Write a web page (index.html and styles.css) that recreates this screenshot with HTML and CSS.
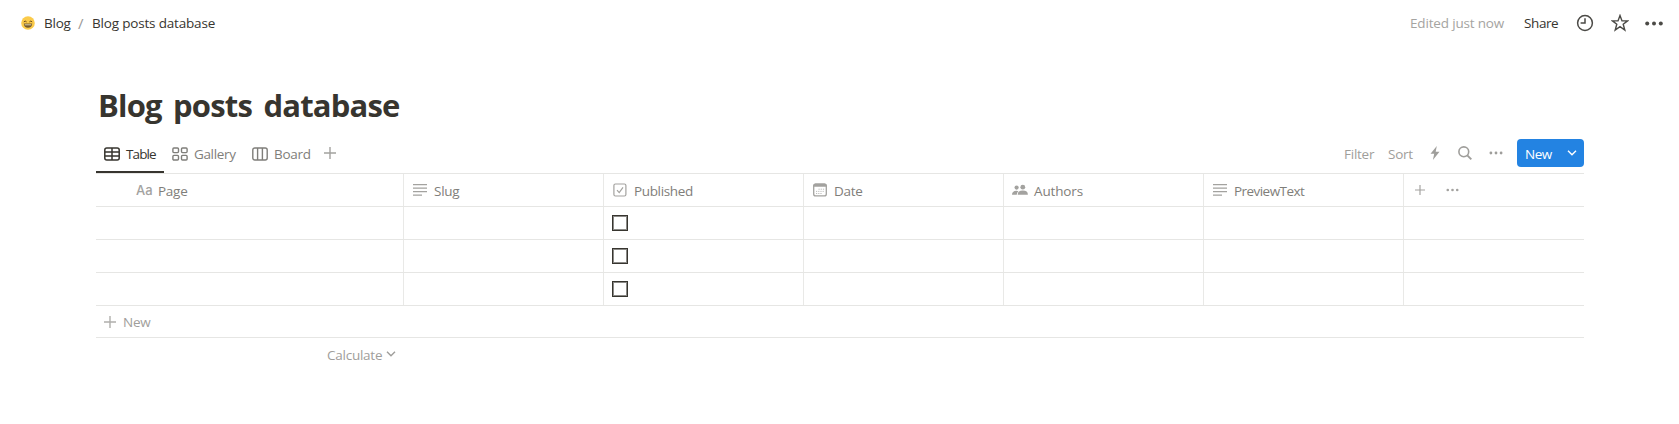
FILE: index.html
```html
<!DOCTYPE html>
<html lang="en">
<head>
<meta charset="utf-8">
<title>Blog posts database</title>
<link rel="stylesheet" href="styles.css">
</head>
<body>
<svg class="defs" width="0" height="0">
  <symbol id="plus" viewBox="0 0 12 12"><path d="M6 0v12M0 6h12" fill="none" stroke="currentColor" stroke-width="1.4"/></symbol>
  <symbol id="dots" viewBox="0 0 14 4"><g fill="currentColor"><circle cx="1.9" cy="2" r="1.4"/><circle cx="7" cy="2" r="1.4"/><circle cx="12.1" cy="2" r="1.4"/></g></symbol>
  <symbol id="chevron" viewBox="0 0 10 6"><path d="M1 .8l4 4 4-4" fill="none" stroke="currentColor" stroke-width="1.4"/></symbol>
  <symbol id="lines" viewBox="0 0 14 12"><path d="M0 .6h14M0 4.1h14M0 7.6h14M0 11.1h9" fill="none" stroke="currentColor" stroke-width="1.2"/></symbol>
</svg>
<header class="topbar">
  <nav class="crumbs">
    <svg class="emoji" width="14" height="14" viewBox="0 0 14 14"><circle cx="7" cy="7" r="6.8" fill="#fbcb4b"/><path d="M2.8 5.9q1.4-1.7 2.8 0M8.4 5.9q1.4-1.7 2.8 0" fill="none" stroke="#6b4a1c" stroke-width="1"/><path d="M2.8 7.4h8.4q-.3 4.4-4.2 4.4T2.8 7.4z" fill="#765a2a"/><path d="M3.7 8.3h6.6v1H3.7z" fill="#d9cfae"/></svg>
    <span class="crumb-parent">Blog</span>
    <span class="slash">/</span>
    <span class="crumb-page">Blog posts database</span>
  </nav>
  <div class="actions">
    <span class="edited">Edited just now</span>
    <span class="share">Share</span>
    <svg class="clock" width="18" height="18" viewBox="0 0 18 18"><g fill="none" stroke="currentColor" stroke-width="1.5"><circle cx="9" cy="9" r="7.4"/><path d="M9 4.3V9H4.6"/></g></svg>
    <svg class="star" width="18" height="18" viewBox="0 0 18 18"><path d="M9 1.5l2 5.4h5.6l-4.4 3.4 1.6 5.8L9 12.7l-4.8 3.4 1.6-5.8L1.4 6.9H7z" fill="none" stroke="currentColor" stroke-width="1.4"/></svg>
    <svg class="more" width="18" height="5" viewBox="0 0 18 5"><g fill="currentColor"><circle cx="2.2" cy="2.5" r="2"/><circle cx="9" cy="2.5" r="2"/><circle cx="15.8" cy="2.5" r="2"/></g></svg>
  </div>
</header>
<main class="page">
  <h1 class="title">Blog posts database</h1>
  <div class="viewbar">
    <div class="tabs">
      <div class="tab tab-active"><svg width="16" height="14" viewBox="0 0 16 14"><g fill="none" stroke="currentColor" stroke-width="1.5"><rect x=".8" y="1" width="14.4" height="12" rx="2"/><path d="M1 5h14M1 9h14M8 1v12"/></g></svg><span class="t-table">Table</span></div>
      <div class="tab"><svg width="16" height="14" viewBox="0 0 16 14"><g fill="none" stroke="currentColor" stroke-width="1.4"><rect x=".9" y="1" width="5.6" height="4.6" rx="1"/><rect x="9.5" y="1" width="5.6" height="4.6" rx="1"/><rect x=".9" y="8.4" width="5.6" height="4.6" rx="1"/><rect x="9.5" y="8.4" width="5.6" height="4.6" rx="1"/></g></svg><span class="t-gallery">Gallery</span></div>
      <div class="tab"><svg width="16" height="14" viewBox="0 0 16 14"><g fill="none" stroke="currentColor" stroke-width="1.4"><rect x=".8" y="1" width="14.4" height="12" rx="2"/><path d="M5.6 1v12M10.4 1v12"/></g></svg><span class="t-board">Board</span></div>
      <svg class="add-view" width="12" height="12"><use href="#plus"/></svg>
    </div>
    <div class="tools">
      <span class="filter">Filter</span>
      <span class="sort">Sort</span>
      <svg class="bolt" width="10" height="14" viewBox="0 0 10 14"><path d="M6.8 0L.5 7.8h3.7L2.9 14l6.6-8.3H5.7z" fill="currentColor"/></svg>
      <svg class="search" width="14" height="14" viewBox="0 0 14 14"><g fill="none" stroke="currentColor" stroke-width="1.6"><circle cx="5.8" cy="5.8" r="4.9"/><path d="M9.3 9.3l4 4" stroke-width="1.9"/></g></svg>
      <svg class="view-more" width="14" height="4"><use href="#dots"/></svg>
      <div class="new-button"><span>New</span><i class="new-drop"><svg width="10" height="6"><use href="#chevron"/></svg></i></div>
    </div>
  </div>
  <section class="grid">
    <div class="row head">
      <div class="cell first"><b class="aa">Aa</b><span class="c-page">Page</span></div>
      <div class="cell"><svg width="16" height="14" viewBox="-1 -1 16 14"><use href="#lines" width="14" height="12"/></svg><span class="c-slug">Slug</span></div>
      <div class="cell"><svg width="16" height="14" viewBox="0 0 16 14"><g fill="none" stroke="currentColor" stroke-width="1.2"><rect x="1.9" y="1" width="12" height="12" rx="1.5"/><path d="M5 7.2l2.2 2.4L11 4.4"/></g></svg><span class="c-published">Published</span></div>
      <div class="cell"><svg width="16" height="14" viewBox="0 0 16 14"><rect x="1.7" y="1.1" width="12.6" height="11.8" rx="2" fill="none" stroke="currentColor" stroke-width="1.3"/><path d="M1.3 2.6Q1.3.5 3.3.5h9.4q2 0 2 2.1v1.2H1.3z" fill="currentColor"/><path d="M6.5 6.2h6M4 8.4h8.5M4 10.5h6" stroke="currentColor" stroke-width="1" stroke-dasharray="1.2 1" fill="none" opacity=".7"/></svg><span class="c-date">Date</span></div>
      <div class="cell"><svg width="16" height="14" viewBox="0 0 16 14"><g fill="currentColor"><circle cx="4.6" cy="4.6" r="2.1"/><circle cx="10.8" cy="4.2" r="2.4"/><path d="M0 11.7q0-3.7 4.4-4 1.2 0 2 .5-1.6 1.3-1.6 3.5z"/><path d="M5.7 11.7q0-4.2 5.1-4.2t5.1 4.2z"/></g></svg><span class="c-authors">Authors</span></div>
      <div class="cell"><svg width="16" height="14" viewBox="-1 -1 16 14"><use href="#lines" width="14" height="12"/></svg><span class="c-preview">PreviewText</span></div>
      <div class="cell last"><svg width="10" height="10"><use href="#plus"/></svg><svg class="col-more" width="13" height="4"><use href="#dots"/></svg></div>
    </div>
    <div class="row"><div class="cell"></div><div class="cell"></div><div class="cell"><i class="check"></i></div><div class="cell"></div><div class="cell"></div><div class="cell"></div><div class="cell last"></div></div>
    <div class="row"><div class="cell"></div><div class="cell"></div><div class="cell"><i class="check"></i></div><div class="cell"></div><div class="cell"></div><div class="cell"></div><div class="cell last"></div></div>
    <div class="row"><div class="cell"></div><div class="cell"></div><div class="cell"><i class="check"></i></div><div class="cell"></div><div class="cell"></div><div class="cell"></div><div class="cell last"></div></div>
    <div class="add-row"><svg width="12" height="12"><use href="#plus"/></svg><span>New</span></div>
    <div class="calc"><span>Calculate</span><svg width="10" height="6"><use href="#chevron"/></svg></div>
  </section>
</main>
</body>
</html>
```

FILE: styles.css
```css
* { box-sizing: border-box; }
body {
  margin: 0;
  background: #fff;
  color: #37352f;
  font: 13.5px/20px "Open Sans", "Noto Sans", sans-serif;
  letter-spacing: -0.25px;
  white-space: nowrap;
}
svg { display: block; flex: none; }
span { flex: none; }
.defs { position: absolute; }

.topbar { display: flex; justify-content: space-between; height: 46px; padding: 0 16px 0 21px; }
.crumbs, .actions { display: flex; align-items: center; }
.crumb-parent { width: 34px; margin-left: 9px; }
.slash { width: 14px; color: #9b9a97; font-size: 15px; }
.crumb-page { letter-spacing: -0.18px; }
.actions { color: #4b4a46; }
.edited { width: 114px; color: #a5a4a1; letter-spacing: -0.17px; }
.share { width: 52px; color: #37352f; letter-spacing: -0.4px; }
.clock { margin-right: 17px; }
.star { margin-right: 16px; }

.page { padding: 37px 95px 0 96px; }
.title { margin: 0; padding-left: 2px; height: 45px; font-size: 31px; line-height: 45px; font-weight: 700; letter-spacing: -0.8px; word-spacing: 4px; }

.viewbar { display: flex; justify-content: space-between; height: 46px; border-bottom: 1px solid #e6e6e4; }
.tabs { display: flex; height: 46px; color: #7f7e7a; }
.tab { display: flex; align-items: center; gap: 6px; height: 46px; padding: 5px 8px 0; }
.tab svg { margin-top: 1px; }
.tab-active { height: 45px; color: #37352f; border-bottom: 2px solid #37352f; padding-top: 8px; }
.tab-active svg { margin: 0; }
.t-table { width: 30px; letter-spacing: -0.9px; }
.t-gallery { width: 42px; letter-spacing: -0.35px; }
.t-board { width: 35px; letter-spacing: -0.3px; }
.add-view { margin: 19px 0 0 7px; color: #a3a29f; }
.tools { display: flex; align-items: center; height: 45px; padding-top: 5px; color: #9f9e9b; }
.filter { width: 44px; padding-top: 1px; }
.sort { width: 42px; padding-top: 1px; }
.bolt { margin-right: 18px; }
.search { margin-right: 17px; }
.view-more { margin-right: 14px; }
.new-button { display: flex; align-items: center; width: 67px; height: 28px; margin-bottom: 1px; padding-left: 8px; border-radius: 4px; background: #2383e2; color: #fff; }
.new-button span { width: 35px; padding-top: 2px; letter-spacing: -0.5px; }
.new-drop { display: flex; align-items: center; height: 28px; padding-left: 7px; }

.row { display: grid; grid-template-columns: 308px repeat(5, 200px) 1fr; height: 33px; border-bottom: 1px solid #e6e6e4; }
.cell { display: flex; align-items: center; border-right: 1px solid #e9e9e7; padding-left: 8px; }
.head .cell { color: #7f7e7a; gap: 6px; }
.head .cell svg, .aa { color: #a3a29f; }
.head .cell span { padding-top: 2px; }
.head .first { padding-left: 40px; }
.head .c-published { letter-spacing: -0.35px; }
.head .c-authors { letter-spacing: -0.15px; }
.head .c-preview { letter-spacing: -0.55px; }
.aa { width: 16px; font-family: Inter, "Open Sans", sans-serif; font-weight: 500; font-size: 13px; letter-spacing: 0; }
.head .last { padding-left: 11px; gap: 21px; }
.last { border-right: 0; }
.check { width: 16px; height: 16px; border: 1px solid #37352f; box-shadow: inset 0 0 0 1px #8b8a87; }
.add-row { display: flex; align-items: center; gap: 7px; height: 32px; padding-left: 8px; color: #9f9e9b; border-bottom: 1px solid #e6e6e4; }
.add-row svg { color: #b0afac; }
.calc { display: flex; align-items: center; gap: 4px; height: 33px; width: 308px; padding: 1px 0 0 231px; color: #9f9e9b; }
.calc span { width: 55px; }
.calc svg { margin-bottom: 2px; }
```
